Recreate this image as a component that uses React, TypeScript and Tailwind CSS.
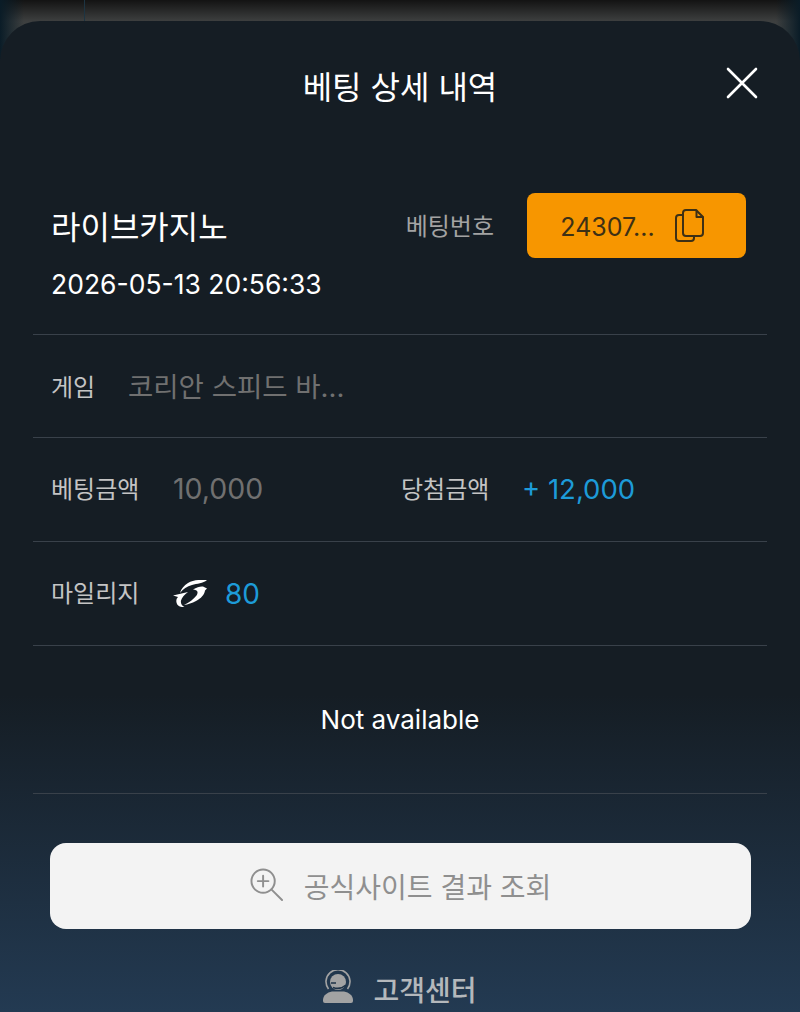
const font = { fontFamily: 'Inter, "Noto Sans CJK KR", "Noto Sans", sans-serif' };

function CopyIcon() {
  return (
    <svg width="29" height="33" viewBox="0 0 29 33" fill="none" stroke="#3d3015" strokeWidth="2" strokeLinejoin="round" strokeLinecap="round">
      <path d="M8 6H4A3 3 0 0 0 1 9V29A3 3 0 0 0 4 32H16A3 3 0 0 0 19 29V27" />
      <path d="M11 1H21L28 8V24A3 3 0 0 1 25 27H11A3 3 0 0 1 8 24V4A3 3 0 0 1 11 1Z" />
      <path d="M21.5 1.5V8H27.5" />
    </svg>
  );
}

function CoinLogo() {
  return (
    <svg width="34" height="27" viewBox="0 0 34 27" fill="#ffffff">
      <path d="M34 0C27 -0.500 20 0 15 3C11 5.500 8 9 7 13C10 9 14 6.500 19 5C24 3.500 30 3.500 34 0Z" />
      <path d="M20 9.500C24 7 28 6 30 6.500L34 8.500L32 10.500C31.500 14.500 28 18.500 23 21C19 23 15 24.500 11 25C16 22.500 21 19 23.500 15.500C25.500 12.500 25 10 20 9.500Z" />
      <path d="M0 15.500L15 12C11.500 14.500 9 17.500 8 20.500C7.500 23 8.500 25.500 11.500 27C7 27.500 4 25.500 3.500 22.500C3 20.500 3.500 18.500 5 17Z" />
    </svg>
  );
}

function HeadsetIcon() {
  return (
    <svg width="30" height="33" viewBox="0 0 30 33" fill="none">
      <path d="M5.500 19A12 12 0 1 1 24.500 19" stroke="#a3a3a3" strokeWidth="1.600" />
      <circle cx="15" cy="12" r="8" fill="#a3a3a3" />
      <path d="M8 13H13M10 17.500C14 19 19 18.500 23 15" stroke="#1f3347" strokeWidth="1.600" />
      <path d="M9 21.500H21C26 22.500 30 25.500 30 30V31A2 2 0 0 1 28 33H2A2 2 0 0 1 0 31V30C0 25.500 4 22.500 9 21.500Z" fill="#a3a3a3" />
    </svg>
  );
}

function Divider() {
  return <div className="h-px bg-[#39414a]" />;
}

export default function App() {
  return (
    <div style={font} className="relative h-[1012px] w-[800px] overflow-hidden bg-[linear-gradient(90deg,#0a1c27_0px,#0a1c2700_24px,#0a1c2700_776px,#0a1c27_800px),linear-gradient(180deg,#131313_0px,#3d3f3f_21px,#3d4444_60px)] pt-[21px]">
      <div className="absolute top-0 left-[84px] h-[21px] w-px bg-[#1d3442]" />
      <div className="relative flex h-[991px] flex-col rounded-t-[40px] bg-[linear-gradient(180deg,#151d24_0%,#151d24_68%,#233a52_100%)]">
        <div className="relative flex h-[135px] shrink-0 items-start justify-center pt-[41px]">
          <h1 className="text-[32px] leading-[52px] font-normal text-white">베팅 상세 내역</h1>
          <svg className="absolute top-[46px] right-[42px]" width="32" height="32" viewBox="0 0 32 32" stroke="#ffffff" strokeWidth="2.600" strokeLinecap="round">
            <path d="M2 2L30 30M30 2L2 30" />
          </svg>
        </div>

        <div className="mx-[33px] flex shrink-0 flex-col">
          <div className="flex h-[178px] shrink-0 flex-col">
            <div className="flex items-start justify-between pt-[37px] pr-[21px] pl-[18px]">
              <div className="pt-[13px] text-[32px] leading-[44px] font-normal text-white">라이브카지노</div>
              <div className="flex items-center">
                <span className="mr-[33px] pt-[2px] text-[24px] text-[#a3a3a3]">베팅번호</span>
                <div className="flex h-[65px] w-[219px] items-center justify-center gap-[20px] rounded-[8px] bg-[#f79600] pr-[9px] text-[25px] text-[#3d3015]">
                  <span className="pt-[4px]">24307...</span>
                  <CopyIcon />
                </div>
              </div>
            </div>
            <div className="px-[18px] pt-[8px] text-[26.500px] leading-[36px] text-white">2026-05-13 20:56:33</div>
          </div>
          <Divider />

          <div className="flex h-[102px] shrink-0 items-center px-[18px] pt-[3px]">
            <span className="w-[77px] text-[24px] text-[#c4c4c4]">게임</span>
            <span className="text-[27.500px] text-[#707070]">코리안 스피드 바...</span>
          </div>
          <Divider />

          <div className="flex h-[103px] shrink-0 items-center px-[18px]">
            <span className="w-[122px] text-[24px] text-[#c4c4c4]">베팅금액</span>
            <span className="w-[228px] text-[28.500px] text-[#707070]">10,000</span>
            <span className="w-[121px] text-[24px] text-[#c4c4c4]">당첨금액</span>
            <span className="text-[27.500px] text-[#1d9bd8]">+ 12,000</span>
          </div>
          <Divider />

          <div className="flex h-[103px] shrink-0 items-center px-[18px]">
            <span className="w-[122px] text-[24px] text-[#c4c4c4]">마일리지</span>
            <CoinLogo />
            <span className="ml-[18px] text-[28px] text-[#1d9bd8]">80</span>
          </div>
          <Divider />

          <div className="flex h-[147px] shrink-0 items-center justify-center text-[26px] text-white">Not available</div>
          <Divider />
        </div>

        <div className="mt-[49px] ml-[50px] flex h-[86px] w-[701px] shrink-0 items-center justify-center gap-[21px] rounded-[16px] bg-[#f3f3f3] text-[#8f8f8f]">
          <svg className="mb-[3px]" width="33" height="33" viewBox="0 0 34 34" fill="none" stroke="#8f8f8f" strokeWidth="2" strokeLinecap="round">
            <circle cx="13.500" cy="13.500" r="12" />
            <path d="M22 22L33 33M13.500 8V19M8 13.500H19" />
          </svg>
          <span className="pt-[4px] text-[28px]">공식사이트 결과 조회</span>
        </div>

        <div className="mt-[41px] flex shrink-0 items-start justify-center gap-[20px] text-[#b4b8bc]">
          <HeadsetIcon />
          <span className="mt-[-3px] text-[28px] leading-[48px] font-medium">고객센터</span>
        </div>
      </div>
    </div>
  );
}
